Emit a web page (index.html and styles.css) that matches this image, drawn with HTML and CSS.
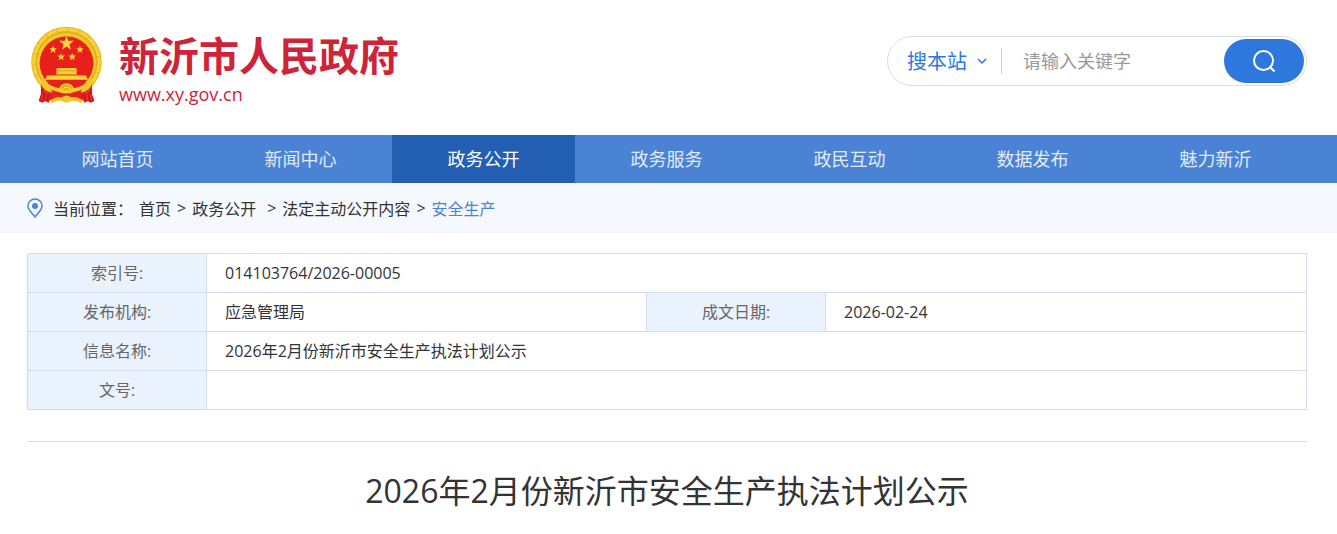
FILE: index.html
```html
<!DOCTYPE html>
<html lang="zh-CN">
<head>
  <meta charset="UTF-8">
  <meta name="viewport" content="width=device-width, initial-scale=1.0">
  <title>2026年2月份新沂市安全生产执法计划公示</title>
  <link rel="stylesheet" href="styles.css">
</head>
<body>
  <header class="header wrap">
    <a class="logo" href="#">
      <svg class="emblem" viewBox="30 20 216 232" aria-hidden="true">
        <circle cx="138" cy="127" r="105" fill="#e9b91f"/>
        <circle cx="138" cy="127" r="97" fill="none" stroke="#f7d23c" stroke-width="9" stroke-dasharray="30 3"/>
        <circle cx="138" cy="129" r="84" fill="none" stroke="#f3c92f" stroke-width="7"/>
        <circle cx="138" cy="128" r="90" fill="none" stroke="#dca31a" stroke-width="2"/>
        <circle cx="138" cy="131" r="80" fill="#e8201c"/>
        <path d="M72 190 H204 L214 200 L214 246 L186 240 L138 234 L90 240 L62 246 L62 200 Z" fill="#e5201b"/>
        <path d="M64 178 L96 214 L90 222 L60 204 Z M212 178 L180 214 L186 222 L216 204 Z" fill="#f3c52b"/>
        <path d="M63 192 Q66 212 92 218 L86 248 L74 243 L66 248 L55 243 L62 222 Z M213 192 Q210 212 184 218 L190 248 L202 243 L210 248 L221 243 L214 222 Z" fill="#d4151b"/>
        <path d="M68 210 Q76 220 88 221 M66 222 L64 242 M78 222 L75 240 M208 210 Q200 220 188 221 M210 222 L212 242 M198 222 L201 240" fill="none" stroke="#ee4038" stroke-width="3"/>
        <path d="M72 183 Q88 200 116 205 Q120 191 138 190 Q156 191 160 205 Q188 200 204 183 L206 190 Q190 211 162 216 Q138 226 114 216 Q86 211 70 190 Z" fill="#f5c92f"/>
        <path d="M123 206 Q126 198 138 197 Q150 198 153 206 M131 210 Q138 203 145 210" fill="none" stroke="#d99a12" stroke-width="3"/>
        <path d="M96 238 Q108 228 124 232 Q138 222 152 232 Q168 228 180 238 L188 240 L181 249 Q160 239 150 244 Q138 251 126 244 Q116 239 95 249 L88 240 Z" fill="#f5c62c"/>
        <path d="M110 145 H166 L168 149 V163 H108 V149 Z" fill="#f5cc33"/>
        <path d="M80 167 H196 L202 180 H74 Z" fill="#f8d33a"/>
        <path d="M106 153 H170 M106 165 H170" stroke="#dfa31e" stroke-width="3"/>
        <g fill="#fbd936">
          <path d="M138 49 L143 64 L160 64 L147 75 L151 91 L138 81 L125 91 L129 75 L116 64 L133 64 Z"/>
          <path id="star" d="M98 78 L101 86 L109 86 L103 92 L105 100 L98 95 L91 100 L93 92 L87 86 L95 86 Z"/>
          <use href="#star" x="80"/>
          <use href="#star" x="24" y="22"/>
          <use href="#star" x="57" y="22"/>
        </g>
      </svg>
      <span class="logo-text">
        <strong class="logo-name">新沂市人民政府</strong>
        <span class="logo-url">www.xy.gov.cn</span>
      </span>
    </a>

    <form class="search" role="search">
      <select class="search-scope" aria-label="搜索范围">
        <option>搜本站</option>
      </select>
      <svg class="search-arrow" viewBox="0 0 10 10" aria-hidden="true"><path d="M1 3 L5 7 L9 3"/></svg>
      <input class="search-input" type="text" placeholder="请输入关键字" aria-label="请输入关键字">
      <button class="search-btn" type="button" aria-label="搜索">
        <svg viewBox="0 0 24 24" aria-hidden="true"><circle cx="11.5" cy="11.5" r="9.5"/><path d="M17.5 17.5 L22.5 22.5"/></svg>
      </button>
    </form>
  </header>

  <nav class="nav">
    <ul class="nav-list">
      <li><a href="#">网站首页</a></li>
      <li><a href="#">新闻中心</a></li>
      <li><a class="on" href="#">政务公开</a></li>
      <li><a href="#">政务服务</a></li>
      <li><a href="#">政民互动</a></li>
      <li><a href="#">数据发布</a></li>
      <li><a href="#">魅力新沂</a></li>
    </ul>
  </nav>

  <div class="position">
    <div class="crumbs wrap">
      <svg class="pin" viewBox="0 0 16 20" aria-hidden="true">
        <path d="M8 1 C4 1 1 4 1 8 C1 12 5 15 8 19 C11 15 15 12 15 8 C15 4 12 1 8 1 Z"/>
        <circle cx="8" cy="8" r="3"/>
      </svg>
      <span class="crumbs-label">当前位置：</span>
      <a href="#">首页</a>
      <span>&gt;</span>
      <a class="channel" href="#">政务公开</a>
      <span>&gt;</span>
      <a href="#">法定主动公开内容</a>
      <span>&gt;</span>
      <a class="current" href="#">安全生产</a>
    </div>
  </div>

  <main class="main wrap">
    <table class="info">
      <colgroup>
        <col class="col-label">
        <col class="col-org">
        <col class="col-label">
        <col>
      </colgroup>
      <tr>
        <th scope="row">索引号:</th>
        <td colspan="3">014103764/2026-00005</td>
      </tr>
      <tr>
        <th scope="row">发布机构:</th>
        <td>应急管理局</td>
        <th scope="row">成文日期:</th>
        <td>2026-02-24</td>
      </tr>
      <tr>
        <th scope="row">信息名称:</th>
        <td colspan="3">2026年2月份新沂市安全生产执法计划公示</td>
      </tr>
      <tr>
        <th scope="row">文号:</th>
        <td colspan="3"></td>
      </tr>
    </table>

    <h1 class="title">2026年2月份新沂市安全生产执法计划公示</h1>
  </main>
</body>
</html>
```
FILE: styles.css
```css
* {
  box-sizing: border-box;
}
body {
  margin: 0;
  background: #fff;
  color: #333;
  font-family: "Open Sans", "Noto Sans CJK SC", sans-serif;
  font-size: 16px;
}
a {
  color: inherit;
  text-decoration: none;
}
.wrap {
  padding: 0 30px 0 27px;
}

/* header */
.header {
  display: flex;
  justify-content: space-between;
  align-items: center;
  height: 135px;
  padding-bottom: 13px;
}
.logo {
  display: flex;
  align-items: center;
  gap: 16px;
  padding: 8px 0 0 3px;
  color: #ce2439;
}
.emblem {
  width: 73px;
  height: 78px;
}
.logo-text {
  display: flex;
  flex-direction: column;
  padding-top: 5px;
}
.logo-name {
  font-size: 40px;
  line-height: 52px;
}
.logo-url {
  font-size: 18px;
  line-height: 24px;
}
.search {
  display: flex;
  align-items: center;
  width: 420px;
  height: 50px;
  padding: 0 2px 0 19px;
  border: 1px solid #d5dfe9;
  border-radius: 25px;
}
.search-scope {
  appearance: none;
  width: 70px;
  padding: 0;
  border: none;
  background: none;
  color: #2e77dc;
  font-family: inherit;
  font-size: 20px;
}
.search-arrow {
  width: 10px;
  height: 10px;
  fill: none;
  stroke: #2e77dc;
  stroke-width: 1.5;
}
.search-input {
  flex: 1;
  min-width: 0;
  height: 26px;
  margin-left: 14px;
  padding: 0 0 0 21px;
  border: none;
  border-left: 1px solid #d0d0d0;
  background: none;
  color: #333;
  font-family: inherit;
  font-size: 18px;
  outline: none;
}
.search-input::placeholder {
  color: #999;
}
.search-btn {
  display: flex;
  align-items: center;
  justify-content: center;
  width: 80px;
  height: 44px;
  border: none;
  border-radius: 22px;
  background: #2e77dc;
  cursor: pointer;
}
.search-btn svg {
  width: 24px;
  height: 24px;
  fill: none;
  stroke: #fff;
  stroke-width: 2;
}

/* navigation */
.nav {
  background: #4a83d3;
}
.nav-list {
  display: flex;
  margin: 0;
  padding: 0 30px 0 26px;
  list-style: none;
}
.nav-list li {
  flex: 1;
}
.nav-list a {
  display: block;
  color: #e1ebf8;
  font-size: 18px;
  line-height: 48px;
  text-align: center;
}
.nav-list .on {
  background: #225eb2;
  color: #fff;
}

/* breadcrumb */
.position {
  background: #f5f9fe;
}
.crumbs {
  display: flex;
  align-items: center;
  gap: 6px;
  height: 50px;
}
.pin {
  width: 16px;
  height: 20px;
  margin-right: 4px;
  fill: none;
  stroke: #4a83d3;
  stroke-width: 1.5;
}
.pin circle {
  fill: #4a83d3;
  stroke: none;
}
.channel {
  margin-right: 5px;
}
.current {
  color: #4a83d3;
}

/* article */
.main {
  padding-top: 20px;
}
.info {
  width: 100%;
  border-collapse: collapse;
  table-layout: fixed;
}
.col-label {
  width: 14%;
}
.col-org {
  width: 34.4%;
}
.info th,
.info td {
  height: 39px;
  padding: 0 18px;
  border: 1px solid #d3dde9;
  font-weight: normal;
  line-height: 24px;
}
.info th {
  background: #eaf3fd;
  color: #666;
  text-align: center;
}
.title {
  margin: 31px 0 0;
  padding-top: 24px;
  border-top: 1px solid #d3dde4;
  font-size: 32px;
  font-weight: normal;
  line-height: 50px;
  text-align: center;
}
```
